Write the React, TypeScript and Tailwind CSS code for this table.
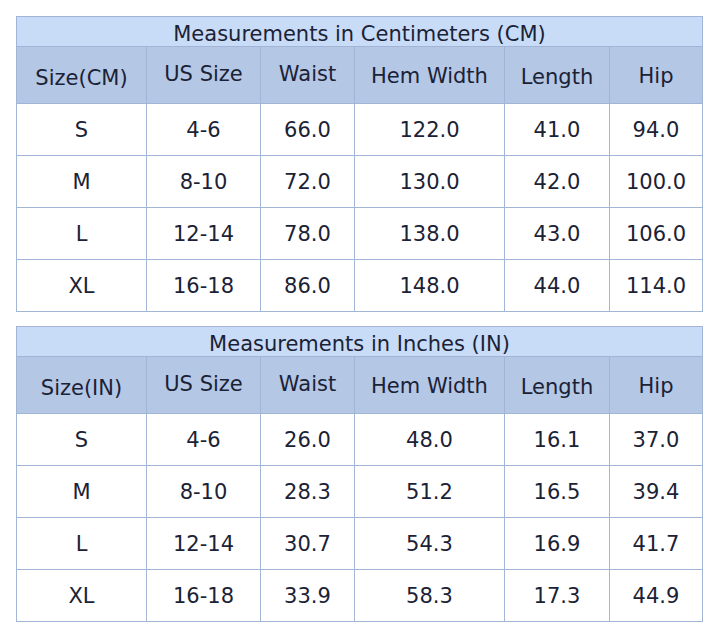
import React from "react";

const cols = ["US Size", "Waist", "Hem Width", "Length", "Hip"];

// header labels don't all sit on the same baseline in the original
const headPad = ["pt-[6px]", "pb-[2px]", "pb-[2px]", "pt-[2px]", "pt-[4px]", "pt-[2px]"];

const cmRows = [
  ["S", "4-6", "66.0", "122.0", "41.0", "94.0"],
  ["M", "8-10", "72.0", "130.0", "42.0", "100.0"],
  ["L", "12-14", "78.0", "138.0", "43.0", "106.0"],
  ["XL", "16-18", "86.0", "148.0", "44.0", "114.0"],
];

const inRows = [
  ["S", "4-6", "26.0", "48.0", "16.1", "37.0"],
  ["M", "8-10", "28.3", "51.2", "16.5", "39.4"],
  ["L", "12-14", "30.7", "54.3", "16.9", "41.7"],
  ["XL", "16-18", "33.9", "58.3", "17.3", "44.9"],
];

const SizeTable = ({
  title,
  unit,
  rows,
}: {
  title: string;
  unit: string;
  rows: string[][];
}) => {
  return (
    <div className="w-[687px] border-l border-t border-[#a2b5d6]">
      <div className="h-[30px] pt-[6px] flex items-center justify-center bg-[#c9dcf7] border-r border-b border-[#a2b5d6]">
        {title}
      </div>
      <div className="grid grid-cols-[130px_114px_94px_150px_105px_93px]">
        {[`Size(${unit})`, ...cols].map((c, i) => (
          <div
            key={c}
            className={`h-[57px] flex items-center justify-center bg-[#b4c7e5] border-r border-b border-[#a2b5d6] ${headPad[i]}`}
          >
            {c}
          </div>
        ))}
        {rows.map((r) =>
          r.map((v, i) => (
            <div
              key={r[0] + i}
              className="h-[52px] pt-[1px] flex items-center justify-center bg-white border-r border-b border-[#a2b5d6]"
            >
              {v}
            </div>
          ))
        )}
      </div>
    </div>
  );
};

export default function App() {
  return (
    <div
      className="w-[718px] h-[642px] bg-white pt-4 pl-4 flex flex-col gap-[14px] text-[21px] leading-none text-[#1b2236]"
      style={{ fontFamily: '"DejaVu Sans", Verdana, sans-serif' }}
    >
      <SizeTable title="Measurements in Centimeters (CM)" unit="CM" rows={cmRows} />
      <SizeTable title="Measurements in Inches (IN)" unit="IN" rows={inRows} />
    </div>
  );
}
